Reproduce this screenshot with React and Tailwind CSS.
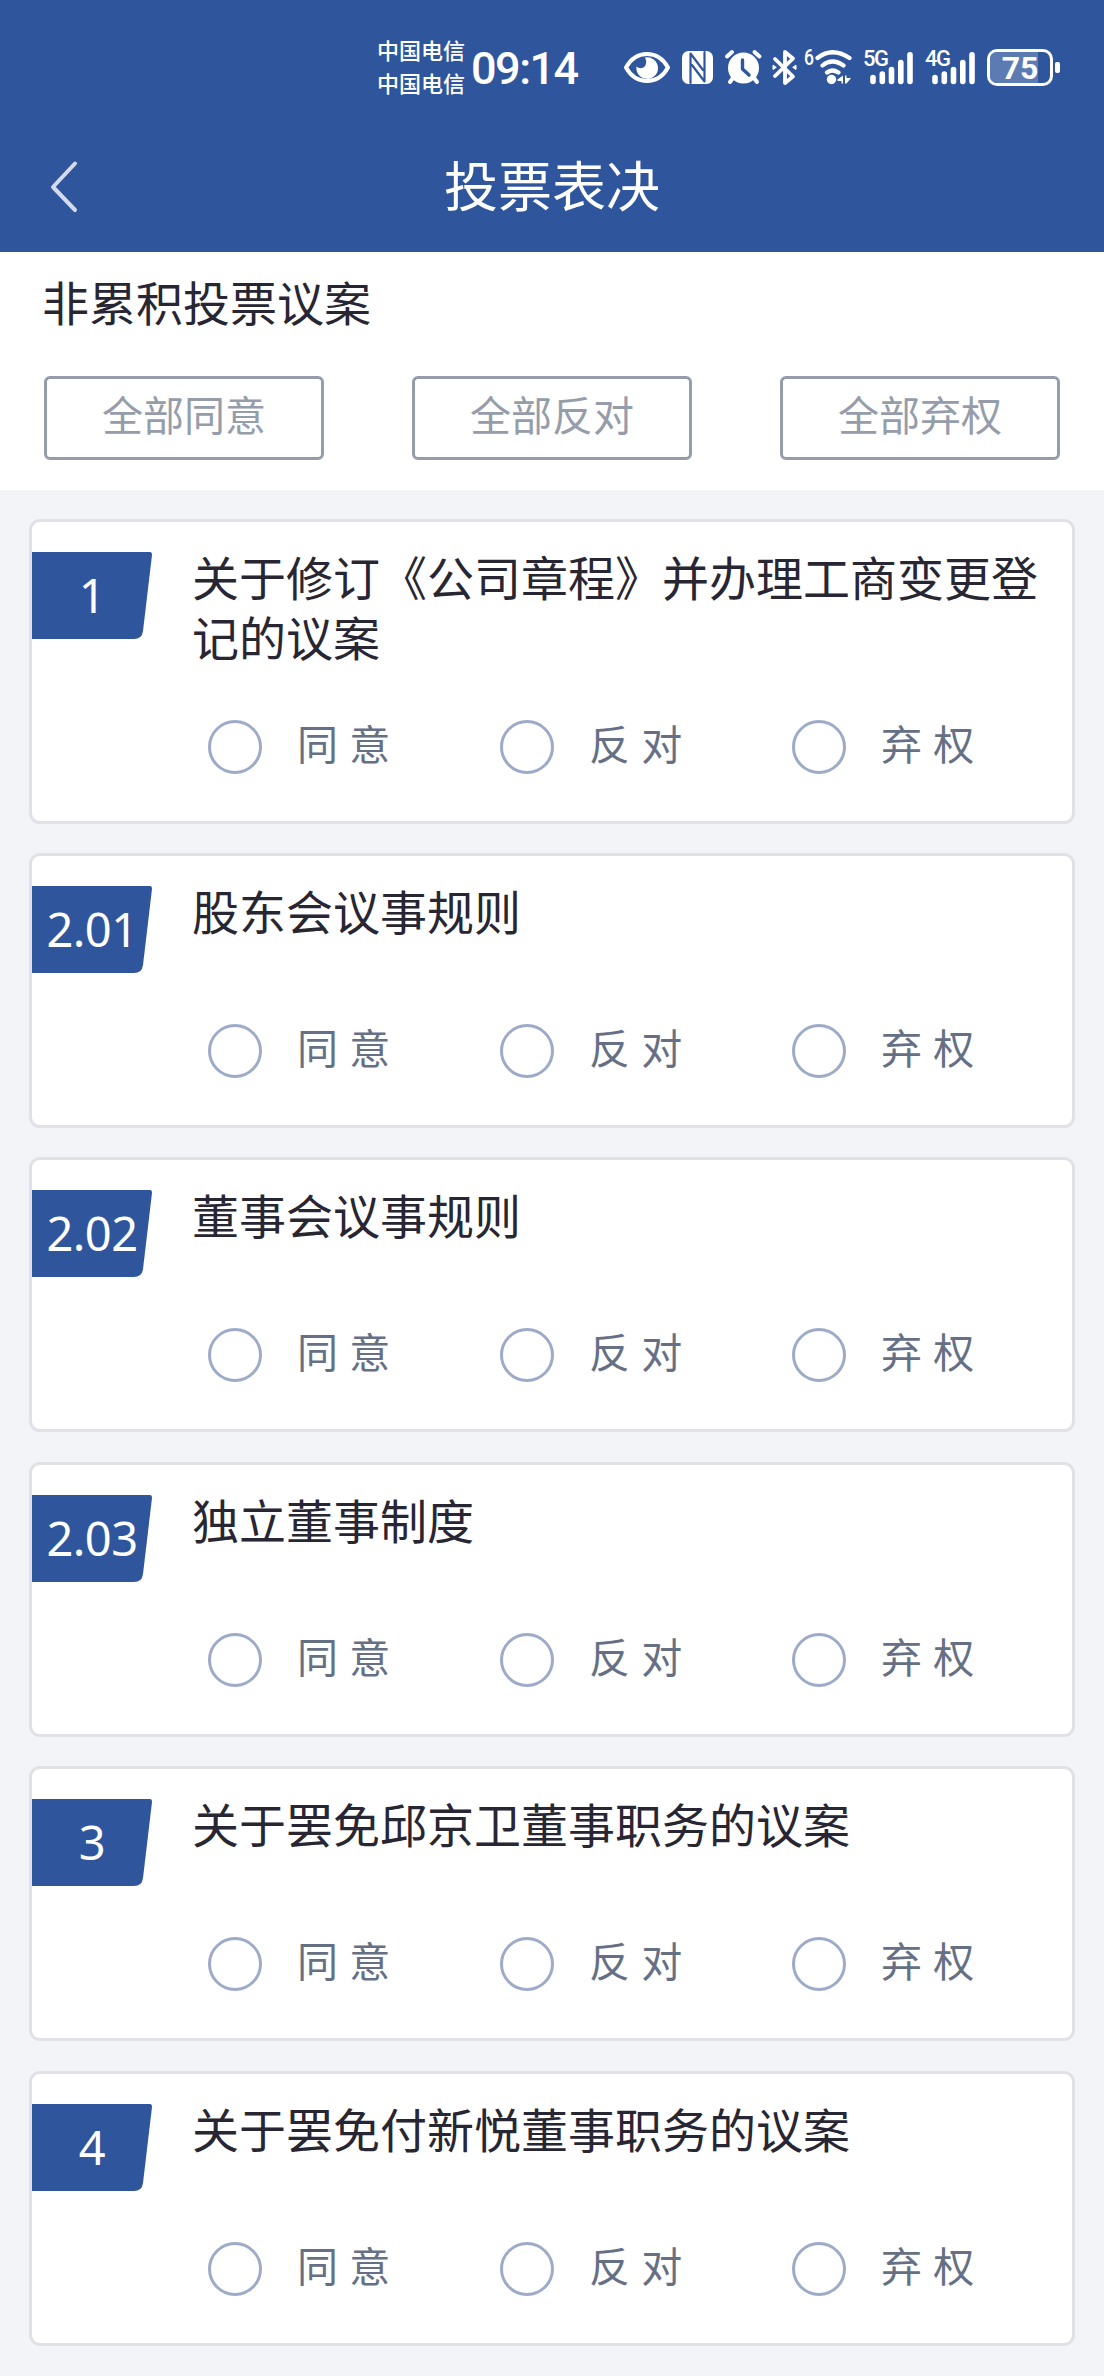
const items = [
  { no: '1', title: '关于修订《公司章程》并办理工商变更登记的议案' },
  { no: '2.01', title: '股东会议事规则' },
  { no: '2.02', title: '董事会议事规则' },
  { no: '2.03', title: '独立董事制度' },
  { no: '3', title: '关于罢免邱京卫董事职务的议案' },
  { no: '4', title: '关于罢免付新悦董事职务的议案' },
];

function Signal({ label }) {
  return (
    <div className="relative h-[36px] w-[51px]">
      <span className="absolute top-[-2px] left-0 font-['Roboto'] text-[22px] leading-[22px] font-medium tracking-[-1.5px]">{label}</span>
      <svg className="absolute inset-0" width="51" height="36" viewBox="0 0 51 36" stroke="currentColor" strokeWidth="5.6" strokeLinecap="round">
        <path d="M10 27.500v4M19.300 24v7.500M28.500 19.500v12M37.800 12.500v19M47 4.800v26.700" />
      </svg>
    </div>
  );
}

function StatusIcons() {
  return (
    <svg width="232" height="46" viewBox="620 44 232 46" fill="none" stroke="currentColor" strokeLinecap="round" strokeLinejoin="round">
      {/* eye */}
      <path d="M626 67.500C636 49.500 658 49.500 668 67.500C658 85.500 636 85.500 626 67.500Z" strokeWidth="4" />
      <path d="M645 57.500A10.800 10.800 0 1 1 636.500 66.500Q639.500 69.500 643.500 67.500Q648 64 645 57.500Z" fill="currentColor" stroke="none" />
      {/* nfc */}
      <rect x="682" y="51" width="31" height="33" rx="6.500" fill="currentColor" stroke="none" />
      <path d="M690.500 83V53.500L703 70M704.500 52V81.500L692 65" stroke="#2f569d" strokeWidth="2.200" />
      {/* alarm */}
      <circle cx="743.500" cy="68" r="15.500" fill="currentColor" stroke="none" />
      <path d="M727 56.500L732 52M759.500 56.500L754.500 52M733 78L730 82M754 78L757 82" strokeWidth="4" />
      <path d="M742.500 60V69L749 75" stroke="#2f569d" strokeWidth="3.400" />
      {/* bluetooth */}
      <path d="M775 59L793 76.500L785 83V52L793 58.500L775 76" strokeWidth="3.800" />
      <path d="M773 65.500V69.500L776 67.500ZM796 65.500V69.500L793 67.500Z" fill="currentColor" strokeWidth="1" />
      {/* wifi */}
      <path d="M817.500 58Q832 46.500 849.500 58M822.500 65.500Q832 57.500 843.500 65.500M827 72.500Q832 68.500 838.500 72.500" strokeWidth="4.200" />
      <circle cx="831.500" cy="79.500" r="4.700" fill="currentColor" stroke="none" />
      <path d="M843 75.500V83.500H841.500V81H837.500V79.500ZM845 75.500H846.500V78H851L846.500 83.500H845Z" fill="currentColor" stroke="none" />
    </svg>
  );
}

function Option({ children }) {
  return (
    <label className="flex w-[292px] items-center">
      <span className="size-[54px] rounded-full border-[3px] border-[#9dabc8]" />
      <span className="relative top-[-5px] ml-[35px] text-[41px] leading-[54px] [word-spacing:2px] whitespace-nowrap text-[#667085]">{children}</span>
    </label>
  );
}

function Card({ no, title }) {
  return (
    <section className="flex min-h-[275px] rounded-[11px] border-[3px] border-[#dfe1e7] bg-white">
      <div className="relative mt-[30px] h-[87px] w-[120px] shrink-0">
        <svg className="absolute inset-0" width="120" height="87" viewBox="0 0 120 87" fill="#2f569d">
          <path d="M0 0H118Q120 0 120 3L111 79Q110 87 102 87H0Z" />
        </svg>
        <span className="relative block w-[120px] text-center font-['Noto_Sans'] text-[47px] leading-[86px] tracking-[-0.5px] text-white">{no}</span>
      </div>
      <div className="ml-[40px] flex flex-1 flex-col pt-[24px]">
        <h2 className="min-h-[90px] w-[850px] text-[47px] leading-[60px] text-[#282632]">{title}</h2>
        <div className="mt-auto mb-[47px] ml-[16px] flex">
          <Option>同 意</Option>
          <Option>反 对</Option>
          <Option>弃 权</Option>
        </div>
      </div>
    </section>
  );
}

export default function App() {
  return (
    <div className="min-h-[2376px] w-[1104px] bg-[#f3f4f7] font-['Noto_Sans_CJK_SC',sans-serif]">
      <header className="h-[252px] bg-[#2f569d] text-white">
        <div className="flex h-[126px] items-start pt-[44px] pl-[377px]">
          <div className="mt-[-11px] w-[90px] text-[22px] leading-[33px] font-medium whitespace-nowrap">
            <div>中国电信</div>
            <div>中国电信</div>
          </div>
          <div className="ml-[4px] w-[112px] font-['Roboto'] text-[45px] leading-[50px] font-medium tracking-[-1.5px]">09:14</div>
          <div className="relative ml-[37px] flex">
            <StatusIcons />
            <span className="absolute top-[3px] left-[184px] font-['Roboto'] text-[22px] leading-[22px] font-medium">
              <span className="inline-block origin-left scale-x-[0.8]">6</span>
            </span>
          </div>
          <div className="mt-[6px] ml-[11px] flex gap-[11px]">
            <Signal label="5G" />
            <Signal label="4G" />
          </div>
          <div className="mt-[5px] ml-[11px] flex items-center gap-[2px]">
            <div className="relative h-[37px] w-[66px] overflow-hidden rounded-[10px] border-[3px] border-white">
              <div className="h-full w-[48px] bg-[#5d7bb3]" />
              <span className="absolute inset-0 text-center font-['Roboto'] text-[32px] leading-[32px] font-bold">75</span>
            </div>
            <div className="h-[11px] w-[5px] rounded-[2px] bg-white" />
          </div>
        </div>
        <div className="grid h-[122px] grid-cols-[200px_1fr_200px] items-center">
          <svg className="ml-[48px]" width="34" height="54" viewBox="0 0 34 54" fill="none" stroke="#d5dbee" strokeWidth="4" strokeLinecap="round" strokeLinejoin="round">
            <path d="M27 3.500L5 27L27 50" />
          </svg>
          <h1 className="mt-[-6px] text-center text-[54px] leading-[60px]">投票表决</h1>
        </div>
      </header>

      <div className="h-[238px] bg-white px-[44px] pt-[17px]">
        <h2 className="ml-[-2px] text-[47px] leading-[64px] text-[#282632]">非累积投票议案</h2>
        <div className="mt-[43px] flex justify-between">
          {['全部同意', '全部反对', '全部弃权'].map((t) => (
            <button key={t} className="h-[84px] w-[280px] rounded-[6px] border-[3px] border-[#959dab] pb-[10px] text-[41px] leading-[68px] text-[#959dab]">{t}</button>
          ))}
        </div>
      </div>

      <main className="flex flex-col gap-[29.4px] px-[29px] pt-[29px] [&>section:first-child]:min-h-[304.6px]">
        {items.map((it) => (
          <Card key={it.no} {...it} />
        ))}
      </main>
    </div>
  );
}
